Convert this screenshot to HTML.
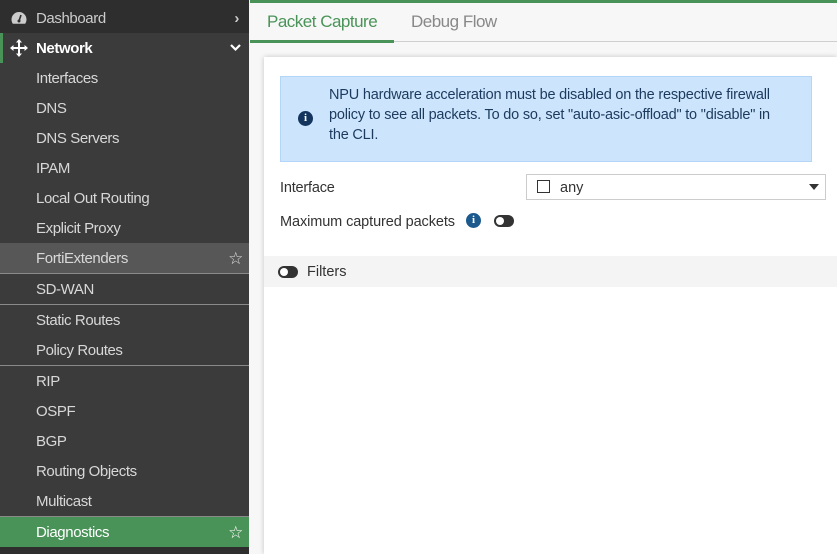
<!DOCTYPE html>
<html><head><style>
*{box-sizing:border-box;margin:0;padding:0}
body{width:837px;height:554px;overflow:hidden;font-family:"Liberation Sans",sans-serif;background:#f7f7f7;position:relative}
#sb{position:absolute;left:0;top:0;width:249px;height:554px;background:#3b3b3b}
.it{position:absolute;left:0;width:249px;height:30px;line-height:32px;padding-left:36px;color:#d8d8d8;font-size:15px;letter-spacing:-0.4px}
.sep{position:absolute;left:0;width:249px;height:1px;background:#8a8a8a}
.star{position:absolute;right:6px;top:0;color:#ddd;font-size:17px}
#main{position:absolute;left:250px;top:0;width:587px;height:554px}
</style></head><body>
<div id="sb">
<div class="it" style="top:0;height:33px;line-height:37px;background:#2e2e2e;color:#ccc">
<svg style="position:absolute;left:11px;top:11px" width="16" height="14" viewBox="0 0 16 14"><path d="M8 1A7.5 7.5 0 0 0 .5 8.5c0 1.6.5 3 1.3 4.2h12.4c.8-1.2 1.3-2.6 1.3-4.2A7.5 7.5 0 0 0 8 1z" fill="#ccc"/><path d="M8 10L10 4" stroke="#2e2e2e" stroke-width="1.6"/><circle cx="8" cy="10" r="1.5" fill="#2e2e2e"/></svg>
Dashboard<span style="position:absolute;right:10px;top:0;font-weight:bold;color:#ccc">&#8250;</span></div>
<div class="it" style="top:33px;color:#fff;font-weight:bold;background:#3b3b3b"><div style="position:absolute;left:0;top:0;width:3px;height:30px;background:#4a9358"></div>
<svg style="position:absolute;left:10px;top:6px" width="18" height="18" viewBox="0 0 18 18" fill="#fff"><path d="M9 0l3 3.5H10v4.5h4.5V6L18 9l-3.5 3v-2H10v4.5h2L9 18l-3-3.5h2V10H3.5v2L0 9l3.5-3v2H8V3.5H6z"/></svg>
Network<svg style="position:absolute;right:8px;top:11px" width="11" height="8" viewBox="0 0 11 8"><path d="M1 1l4.5 4.5L10 1" stroke="#fff" stroke-width="2.2" fill="none"/></svg></div>
<div class="it" style="top:63px">Interfaces</div>
<div class="it" style="top:93px">DNS</div>
<div class="it" style="top:123px">DNS Servers</div>
<div class="it" style="top:153px">IPAM</div>
<div class="it" style="top:183px">Local Out Routing</div>
<div class="it" style="top:213px">Explicit Proxy</div>
<div class="it" style="top:243px;background:#575757">FortiExtenders<span class="star">&#9734;</span></div>
<div class="sep" style="top:273px"></div>
<div class="it" style="top:274px">SD-WAN</div>
<div class="sep" style="top:304px"></div>
<div class="it" style="top:305px">Static Routes</div>
<div class="it" style="top:335px">Policy Routes</div>
<div class="sep" style="top:365px"></div>
<div class="it" style="top:366px">RIP</div>
<div class="it" style="top:396px">OSPF</div>
<div class="it" style="top:426px">BGP</div>
<div class="it" style="top:456px">Routing Objects</div>
<div class="it" style="top:486px">Multicast</div>
<div class="sep" style="top:516px"></div>
<div class="it" style="top:517px;background:#4a9358;color:#fff">Diagnostics<span class="star" style="color:#fff">&#9734;</span></div>
<div style="position:absolute;left:0;top:547px;width:249px;height:7px;background:#2e2e2e"></div>
</div>
<div id="main">
<div style="position:absolute;left:0;top:0;width:587px;height:3px;background:#4a9358"></div>
<div style="position:absolute;left:0;top:41px;width:587px;height:1px;background:#cfcfcf"></div>
<div style="position:absolute;left:0;top:40px;width:144px;height:3px;background:#4a9358"></div>
<div style="position:absolute;left:17px;top:12px;font-size:17px;color:#4a9358;letter-spacing:-0.5px">Packet Capture</div>
<div style="position:absolute;left:161px;top:12px;font-size:17px;color:#888;letter-spacing:-0.5px">Debug Flow</div>
<div style="position:absolute;left:14px;top:57px;width:573px;height:497px;background:#fff;box-shadow:0 0 5px rgba(0,0,0,.2)">
<div style="position:absolute;left:16px;top:19px;width:532px;height:86px;background:#cce5fd;border:1px solid #b3d6f8"></div>
<div style="position:absolute;left:34px;top:54px;width:15px;height:15px;border-radius:50%;background:#14365e;color:#fff;font-size:11px;font-weight:bold;text-align:center;line-height:15px;font-family:'Liberation Serif',serif">i</div>
<div style="position:absolute;left:65px;top:28px;width:452px;font-size:14.5px;line-height:20px;color:#1c3a5e;letter-spacing:-0.2px">NPU hardware acceleration must be disabled on the respective firewall policy to see all packets. To do so, set "auto-asic-offload" to "disable" in the CLI.</div>
<div style="position:absolute;left:16px;top:123px;font-size:14.5px;color:#333;letter-spacing:-0.2px">Interface</div>
<div style="position:absolute;left:262px;top:117px;width:300px;height:26px;border:1px solid #ccc;background:#fff">
<div style="position:absolute;left:10px;top:5px;width:13px;height:13px;border:1.5px solid #333"></div>
<div style="position:absolute;left:33px;top:5px;font-size:14.5px;color:#333">any</div>
<div style="position:absolute;right:6px;top:9px;border-left:5px solid transparent;border-right:5px solid transparent;border-top:6px solid #333"></div></div>
<div style="position:absolute;left:16px;top:157px;font-size:14.5px;color:#333;letter-spacing:-0.1px">Maximum captured packets</div>
<div style="position:absolute;left:202px;top:156px;width:15px;height:15px;border-radius:50%;background:#1c5a8e;color:#fff;font-size:11px;font-weight:bold;text-align:center;line-height:15px;font-family:'Liberation Serif',serif">i</div>
<div style="position:absolute;left:230px;top:158px;width:20px;height:12px;border-radius:6px;background:#333"><div style="position:absolute;left:2px;top:2px;width:8px;height:8px;border-radius:50%;background:#fff"></div></div>
<div style="position:absolute;left:0;top:199px;width:573px;height:31px;background:#f4f4f4"></div>
<div style="position:absolute;left:14px;top:209px;width:20px;height:12px;border-radius:6px;background:#333"><div style="position:absolute;left:2px;top:2px;width:8px;height:8px;border-radius:50%;background:#fff"></div></div>
<div style="position:absolute;left:43px;top:207px;font-size:14.5px;color:#333">Filters</div>
</div>
</div>
</body></html>
